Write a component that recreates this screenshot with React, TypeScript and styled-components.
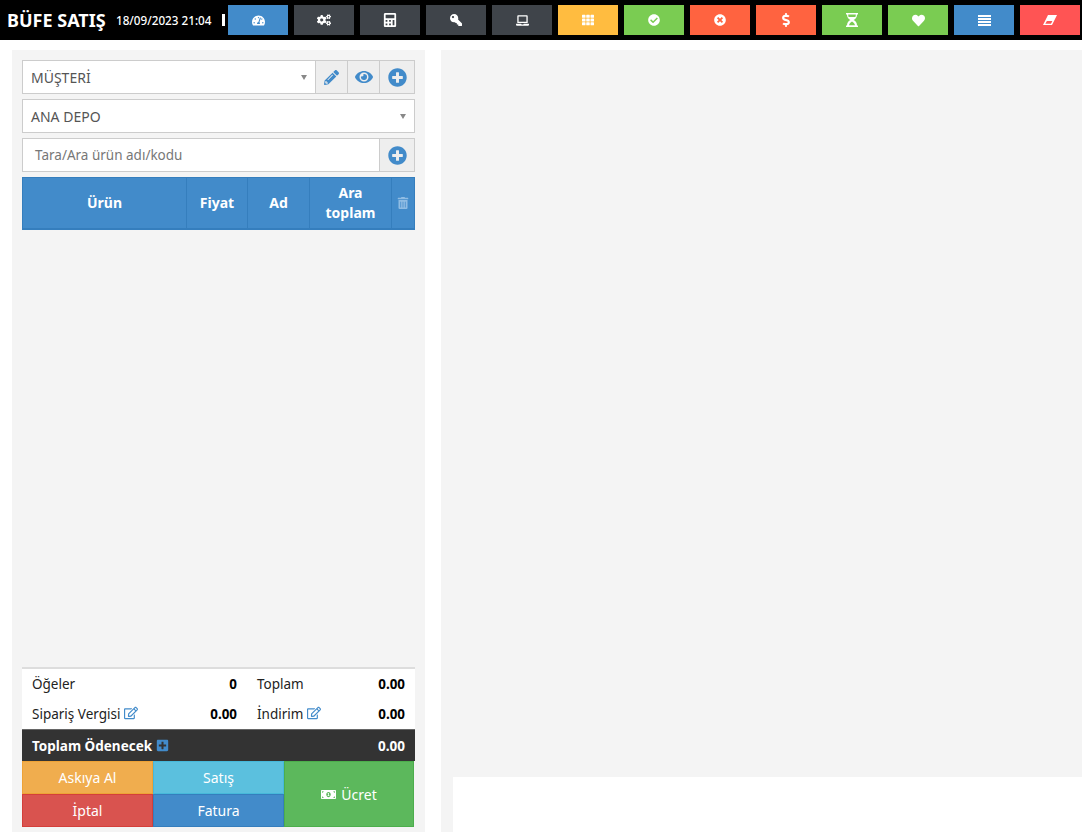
import styled, { createGlobalStyle } from 'styled-components';
import {
  FaTachometerAlt,
  FaCogs,
  FaCalculator,
  FaKey,
  FaLaptop,
  FaTh,
  FaCheckCircle,
  FaTimesCircle,
  FaDollarSign,
  FaHeart,
  FaPencilAlt,
  FaEye,
  FaPlusCircle,
  FaTrashAlt,
  FaRegEdit,
  FaPlusSquare,
  FaMoneyBillAlt,
} from 'react-icons/fa';

const GlobalStyle = createGlobalStyle`
  html, body {
    margin: 0;
    padding: 0;
    background: #fff;
    overflow: hidden;
  }
  * {
    box-sizing: border-box;
  }
  body {
    font-family: 'Noto Sans', 'Open Sans', sans-serif;
  }
`;

const FlippedKey = styled(FaKey)`
  transform: scaleX(-1);
`;

const EraserIcon = () => (
  <svg width="14" height="10" viewBox="0 0 14 10">
    <path
      fill="currentColor"
      fillRule="evenodd"
      d="M5 0H14L9 10H0ZM3.9 6L2.3 8.7H8L9.4 6Z"
    />
  </svg>
);

const HourglassIcon = () => (
  <svg width="12" height="14" viewBox="0 0 12 14">
    <path
      fill="currentColor"
      fillRule="evenodd"
      d="M0 0H12V1.5H11C11 4.5 9.5 6 7.5 7C9.5 8 11 9.5 11 12.5H12V14H0V12.5H1C1 9.5 2.5 8 4.5 7C2.5 6 1 4.5 1 1.5H0ZM2.2 1.5C2.2 2.4 2.3 3.2 2.6 4H9.4C9.7 3.2 9.8 2.4 9.8 1.5ZM3 12.2H9C8.6 10.6 7.4 9.4 6 8.6C4.6 9.4 3.4 10.6 3 12.2Z"
    />
  </svg>
);

const StripedListIcon = () => (
  <svg width="13" height="11" viewBox="0 0 13 11">
    <path
      fill="currentColor"
      d="M0 0H13V2H0ZM0 3H13V5H0ZM0 6H13V8H0ZM0 9H13V11H0Z"
    />
  </svg>
);

const toolbarButtons = [
  { icon: <FaTachometerAlt size={13} />, color: '#428bca' },
  { icon: <FaCogs size={14} />, color: '#3f444a' },
  { icon: <FaCalculator size={14} />, color: '#3f444a' },
  { icon: <FlippedKey size={12} />, color: '#3f444a' },
  { icon: <FaLaptop size={13} />, color: '#3f444a' },
  { icon: <FaTh size={12} />, color: '#ffbc40' },
  { icon: <FaCheckCircle size={12} />, color: '#7acc52' },
  { icon: <FaTimesCircle size={12} />, color: '#ff6340' },
  { icon: <FaDollarSign size={14} />, color: '#ff6340' },
  { icon: <HourglassIcon />, color: '#7acc52' },
  { icon: <FaHeart size={13} />, color: '#7acc52' },
  { icon: <StripedListIcon />, color: '#428bca' },
  { icon: <EraserIcon />, color: '#ff5454' },
];

const App = () => {
  return (
    <>
      <GlobalStyle />
      <Page>
        <TopBar>
          <Brand>BÜFE SATIŞ</Brand>
          <Clock>18/09/2023 21:04</Clock>
          <Ticker />
          <Toolbar>
            {toolbarButtons.map((b, i) => (
              <ToolButton key={i} $color={b.color}>
                {b.icon}
              </ToolButton>
            ))}
          </Toolbar>
        </TopBar>
        <Content>
          <LeftPanel>
            <Controls>
              <Row>
                <SelectBox>
                  MÜŞTERİ
                  <Caret />
                </SelectBox>
                <Addon $width={33}>
                  <FaPencilAlt size={15} />
                </Addon>
                <Addon $width={33}>
                  <FaEye size={18} />
                </Addon>
                <Addon $width={36}>
                  <FaPlusCircle size={19} />
                </Addon>
              </Row>
              <Row>
                <SelectBox>
                  ANA DEPO
                  <Caret />
                </SelectBox>
              </Row>
              <Row>
                <SearchBox>Tara/Ara ürün adı/kodu</SearchBox>
                <Addon $width={36}>
                  <FaPlusCircle size={19} />
                </Addon>
              </Row>
              <TableHead>
                <HeadCell $width={164}>Ürün</HeadCell>
                <HeadCell $width={61}>Fiyat</HeadCell>
                <HeadCell $width={62}>Ad</HeadCell>
                <HeadCell $width={82}>
                  Ara
                  <br />
                  toplam
                </HeadCell>
                <TrashCell>
                  <FaTrashAlt size={12} />
                </TrashCell>
              </TableHead>
            </Controls>
            <Summary>
              <Totals>
                <TotalRow>
                  <TotalLabel>Öğeler</TotalLabel>
                  <TotalValue>0</TotalValue>
                  <TotalLabel>Toplam</TotalLabel>
                  <TotalValue>0.00</TotalValue>
                </TotalRow>
                <TotalRow>
                  <TotalLabel>
                    Sipariş Vergisi <EditIcon />
                  </TotalLabel>
                  <TotalValue>0.00</TotalValue>
                  <TotalLabel>
                    İndirim <EditIcon />
                  </TotalLabel>
                  <TotalValue>0.00</TotalValue>
                </TotalRow>
              </Totals>
              <GrandTotal>
                <span>
                  Toplam Ödenecek <PlusIcon />
                </span>
                <span>0.00</span>
              </GrandTotal>
              <Actions>
                <ActionButton $color="#f0ad4e" $border="#eea236">
                  Askıya Al
                </ActionButton>
                <ActionButton $color="#5bc0de" $border="#46b8da">
                  Satış
                </ActionButton>
                <PayButton>
                  <FaMoneyBillAlt size={15} /> Ücret
                </PayButton>
                <ActionButton $color="#d9534f" $border="#d43f3a">
                  İptal
                </ActionButton>
                <ActionButton $color="#428bca" $border="#357ebd">
                  Fatura
                </ActionButton>
              </Actions>
            </Summary>
          </LeftPanel>
          <RightPanel>
            <ProductArea />
            <BelowArea>
              <WhiteBox />
            </BelowArea>
          </RightPanel>
        </Content>
      </Page>
    </>
  );
};

export default App;

const Page = styled.div`
  width: 1082px;
  height: 832px;
  overflow: hidden;
`;

const TopBar = styled.div`
  display: flex;
  align-items: center;
  height: 40px;
  background: #000;
  padding-left: 7px;
  overflow: hidden;
`;

const Brand = styled.div`
  width: 109px;
  flex: none;
  font-size: 18px;
  font-weight: 700;
  color: #fff;
  white-space: nowrap;
`;

const Clock = styled.div`
  width: 106px;
  flex: none;
  font-size: 11.7px;
  font-weight: 500;
  color: #fff;
  white-space: nowrap;
`;

const Ticker = styled.div`
  width: 6px;
  height: 12px;
  flex: none;
  border-left: 3px solid #fff;
`;

const Toolbar = styled.div`
  display: flex;
  gap: 6px;
  flex: none;
`;

const ToolButton = styled.div<{ $color: string }>`
  display: flex;
  align-items: center;
  justify-content: center;
  width: 60px;
  height: 30px;
  background: ${({ $color }) => $color};
  color: #fff;
`;

const Content = styled.div`
  display: flex;
  height: 792px;
  padding: 10px 0 0 12px;
`;

const LeftPanel = styled.div`
  display: flex;
  flex-direction: column;
  justify-content: space-between;
  width: 413px;
  height: 782px;
  flex: none;
  background: #f4f4f4;
  padding: 10px 10px 5px;
`;

const Controls = styled.div`
  display: flex;
  flex-direction: column;
  gap: 5px;
`;

const Row = styled.div`
  display: flex;
  height: 34px;
`;

const SelectBox = styled.div`
  position: relative;
  display: flex;
  align-items: center;
  flex: 1;
  background: #fff;
  border: 1px solid #ccc;
  padding: 0 8px;
  font-size: 14px;
  color: #555;
`;

const Caret = styled.span`
  position: absolute;
  right: 8px;
  top: 14px;
  border-left: 3px solid transparent;
  border-right: 3px solid transparent;
  border-top: 5px solid #888;
`;

const SearchBox = styled(SelectBox)`
  padding-left: 12px;
  color: #777;
  font-size: 13.5px;
`;

const Addon = styled.div<{ $width: number }>`
  display: flex;
  align-items: center;
  justify-content: center;
  width: ${({ $width }) => $width}px;
  flex: none;
  margin-left: -1px;
  background: #eee;
  border: 1px solid #ccc;
  color: #428bca;
`;

const TableHead = styled.div`
  display: flex;
  height: 53px;
  background: #428bca;
  border: 1px solid #357ebd;
  border-bottom-width: 2px;
`;

const HeadCell = styled.div<{ $width: number }>`
  display: flex;
  align-items: center;
  justify-content: center;
  width: ${({ $width }) => $width}px;
  flex: none;
  border-right: 1px solid #357ebd;
  text-align: center;
  color: #fff;
  font-size: 14px;
  font-weight: 700;
  line-height: 20px;
`;

const TrashCell = styled.div`
  display: flex;
  align-items: center;
  justify-content: center;
  flex: 1;
  color: #8fbce3;
`;

const Summary = styled.div`
  display: flex;
  flex-direction: column;
`;

const Totals = styled.div`
  background: #fff;
  border-top: 2px solid #ddd;
`;

const TotalRow = styled.div`
  display: grid;
  grid-template-columns: 145px 60px 108px 60px;
  align-items: center;
  height: 30px;
  padding-left: 10px;
  font-size: 13.5px;
  color: #222;
  & > :nth-child(3) {
    margin-left: 20px;
  }
`;

const TotalLabel = styled.div`
  white-space: nowrap;
`;

const TotalValue = styled.div`
  text-align: right;
  font-weight: 700;
  font-size: 13.4px;
  color: #000;
`;

const EditIcon = styled(FaRegEdit)`
  color: #428bca;
  font-size: 14px;
  vertical-align: -1px;
`;

const PlusIcon = styled(FaPlusSquare)`
  color: #428bca;
  font-size: 13px;
  vertical-align: -1px;
`;

const GrandTotal = styled.div`
  display: flex;
  align-items: center;
  justify-content: space-between;
  height: 32px;
  padding: 0 10px;
  background: #333;
  border-top: 1px solid #666;
  color: #fff;
  font-size: 13.5px;
  font-weight: 700;
`;

const Actions = styled.div`
  display: grid;
  grid-template-columns: 131px 131px 130px;
  grid-template-rows: 33px 33px;
`;

const ActionButton = styled.div<{ $color: string; $border: string }>`
  display: flex;
  align-items: center;
  justify-content: center;
  background: ${({ $color }) => $color};
  border: 1px solid ${({ $border }) => $border};
  color: #fff;
  font-size: 14px;
`;

const PayButton = styled.div`
  grid-row: 1 / span 2;
  grid-column: 3;
  display: flex;
  align-items: center;
  justify-content: center;
  gap: 5px;
  background: #5cb85c;
  border: 1px solid #4cae4c;
  color: #fff;
  font-size: 14px;
`;

const RightPanel = styled.div`
  display: flex;
  flex-direction: column;
  width: 641px;
  margin-left: 16px;
  flex: none;
  background: #f4f4f4;
`;

const ProductArea = styled.div`
  height: 727px;
  flex: none;
`;

const BelowArea = styled.div`
  flex: 1;
  padding-left: 12px;
`;

const WhiteBox = styled.div`
  height: 100%;
  background: #fff;
`;
